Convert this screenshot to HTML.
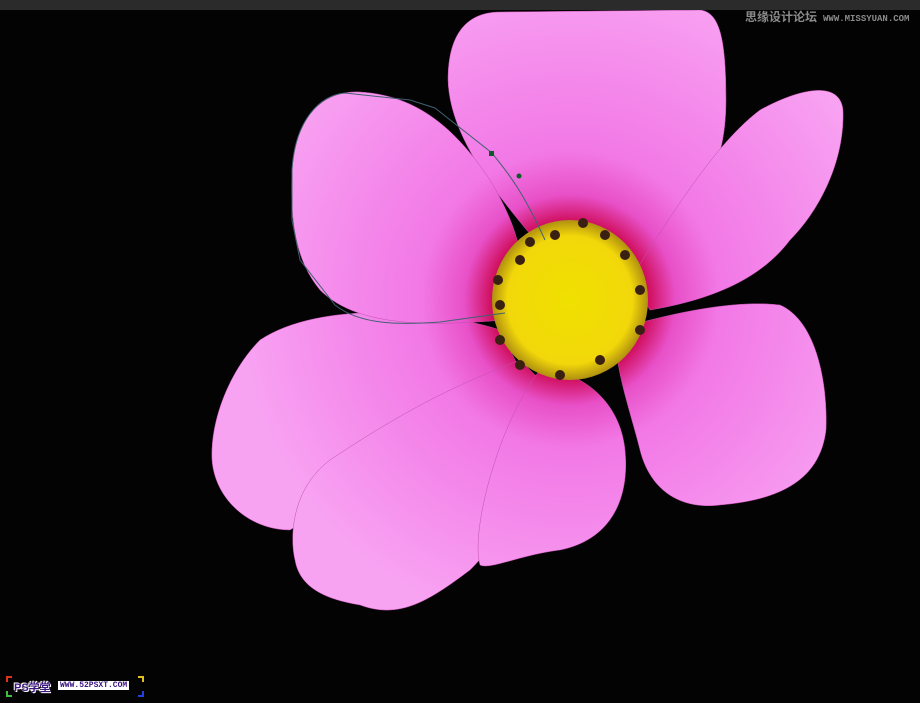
<!DOCTYPE html>
<html><head><meta charset="utf-8"><style>
html,body{margin:0;padding:0;background:#000;}
.w{position:relative;width:920px;height:703px;overflow:hidden;background:#030303;}
.top{position:absolute;left:0;top:0;width:920px;height:10px;background:#2b2b2b;}
.wm1{position:absolute;left:745px;top:8px;font:bold 12px "Liberation Sans","Noto Sans CJK SC",sans-serif;color:#8a8a8a;}
.wm1 span{font-size:9px;margin-left:6px;font-family:"Liberation Mono",monospace;}
.wm2{position:absolute;left:6px;top:676px;height:20px;width:138px;font:bold 11px "Liberation Sans","Noto Sans CJK SC",sans-serif;}
.wm2 .a{position:absolute;left:8px;top:3px;color:#3b1680;text-shadow:0 0 1px #fff,0 0 1px #fff,1px 1px 0 #fff,-1px -1px 0 #fff;}
.wm2 .b{position:absolute;left:52px;top:5px;font-size:8px;font-family:"Liberation Mono",monospace;color:#3b1680;background:#fff;padding:0 2px;}
.c{position:absolute;width:4px;height:4px;}
</style></head><body><div class="w">
<svg width="920" height="703" style="position:absolute;left:0;top:0">
<defs>
<radialGradient id="g" gradientUnits="userSpaceOnUse" cx="570" cy="300" r="330">
<stop offset="0" stop-color="#b0003a"/>
<stop offset="0.24" stop-color="#d01060"/>
<stop offset="0.32" stop-color="#e850c8"/>
<stop offset="0.45" stop-color="#f278e6"/>
<stop offset="1" stop-color="#f8a2f2"/>
</radialGradient>
<radialGradient id="y" cx="0.5" cy="0.5" r="0.5">
<stop offset="0" stop-color="#f0e000"/>
<stop offset="0.8" stop-color="#f2d80a"/>
<stop offset="1" stop-color="#b09010"/>
</radialGradient>
</defs>
<g fill="url(#g)" stroke="#c050b0" stroke-width="0.5">
<path d="M560,270 C520,220 450,150 448,80 C448,30 470,12 500,12 L700,10 C720,12 726,40 726,100 C726,170 700,210 640,265 Z"/>
<path d="M630,280 C680,200 720,140 760,110 C800,88 840,80 843,110 C845,160 820,210 790,240 C760,280 710,300 650,310 Z"/>
<path d="M615,330 C680,310 740,300 780,305 C815,320 828,380 826,430 C820,480 780,500 720,505 C680,510 650,490 640,450 C630,410 615,370 615,330 Z"/>
<path d="M500,330 C440,310 320,300 260,340 C230,370 210,420 212,460 C215,500 250,530 290,530 C340,500 450,420 520,370 Z"/>
<path d="M520,360 C470,380 420,400 330,460 C290,490 290,540 295,560 C300,590 330,600 360,605 C400,620 430,600 470,570 C520,520 560,440 560,400 Z"/>
<path d="M540,370 C580,370 620,400 625,450 C630,500 610,540 560,550 C520,555 490,570 480,565 C470,530 500,420 540,370 Z"/>
<path d="M505,320 C440,325 360,330 320,290 C295,260 290,220 292,170 C295,120 320,90 360,92 C410,95 450,120 490,180 C520,230 535,280 505,320 Z"/>
</g>
<ellipse cx="570" cy="300" rx="78" ry="80" fill="url(#y)"/>
<g fill="#3a2010">
<circle cx="500" cy="305" r="5"/><circle cx="498" cy="280" r="5"/><circle cx="520" cy="260" r="5"/><circle cx="530" cy="242" r="5"/><circle cx="555" cy="235" r="5"/><circle cx="583" cy="223" r="5"/><circle cx="605" cy="235" r="5"/><circle cx="625" cy="255" r="5"/><circle cx="640" cy="290" r="5"/><circle cx="640" cy="330" r="5"/><circle cx="600" cy="360" r="5"/><circle cx="560" cy="375" r="5"/><circle cx="520" cy="365" r="5"/><circle cx="500" cy="340" r="5"/>
</g>
<path d="M505,313 L440,322 C400,325 360,325 335,305 L300,260 L292,220 L292,170 C295,120 320,95 345,93 L410,100 L435,108 L492,153 C505,170 520,185 545,240" fill="none" stroke="#406070" stroke-width="1"/>
<rect x="489" y="151" width="5" height="5" fill="#0a5a2a"/>
<circle cx="519" cy="176" r="2.5" fill="#0a5a2a"/>
</svg>
<div class="top"></div>
<div class="wm1">思缘设计论坛<span>WWW.MISSYUAN.COM</span></div>
<div class="c" style="left:6px;top:676px;border-left:2px solid #e03020;border-top:2px solid #e03020;"></div>
<div class="c" style="left:6px;top:691px;border-left:2px solid #40c040;border-bottom:2px solid #40c040;"></div>
<div class="c" style="left:138px;top:676px;border-right:2px solid #e0c020;border-top:2px solid #e0c020;"></div>
<div class="c" style="left:138px;top:691px;border-right:2px solid #2040e0;border-bottom:2px solid #2040e0;"></div>
<div class="wm2"><span class="a">PS学堂</span><span class="b">WWW.52PSXT.COM</span></div>
</div></body></html>
